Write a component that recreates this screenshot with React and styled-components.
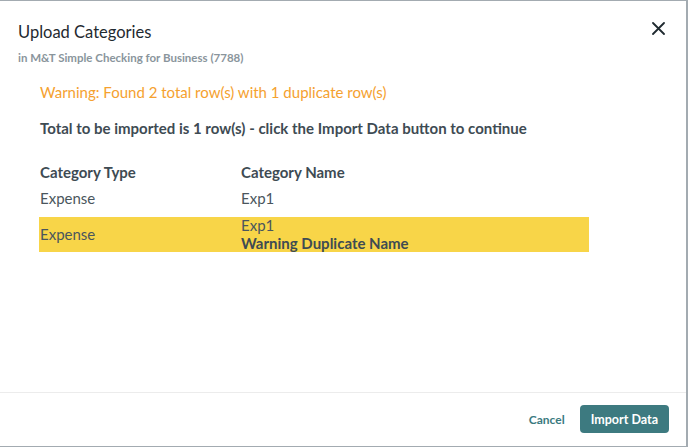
import React from 'react';
import styled, { createGlobalStyle } from 'styled-components';

const GlobalStyle = createGlobalStyle`
  html, body {
    margin: 0;
    padding: 0;
    background: #a3abb1;
    font-family: Lato, "Noto Sans", sans-serif;
  }
`;

const rows = [
  { type: 'Expense', name: 'Exp1' },
  { type: 'Expense', name: 'Exp1', warning: 'Warning Duplicate Name' },
];

const App = () => {
  return (
    <>
      <GlobalStyle />
      <Modal>
        <Header>
          <div>
            <Title>Upload Categories</Title>
            <Subtitle>in M&amp;T Simple Checking for Business (7788)</Subtitle>
          </div>
          <CloseButton aria-label="close">
            <svg width="13" height="13" viewBox="0 0 13 13">
              <path d="M1 1L12 12M12 1L1 12" stroke="#1f2a30" strokeWidth="1.8" strokeLinecap="round" />
            </svg>
          </CloseButton>
        </Header>

        <Body>
          <WarningText>Warning: Found 2 total row(s) with 1 duplicate row(s)</WarningText>
          <TotalText>Total to be imported is 1 row(s) - click the Import Data button to continue</TotalText>

          <Table>
            <HeadRow>
              <Cell>Category Type</Cell>
              <Cell>Category Name</Cell>
            </HeadRow>
            {rows.map((r, i) => (
              <Row key={i} $dup={!!r.warning}>
                <Cell>{r.type}</Cell>
                <Cell>
                  <div>{r.name}</div>
                  {r.warning && <DupNote>{r.warning}</DupNote>}
                </Cell>
              </Row>
            ))}
          </Table>
        </Body>

        <Footer>
          <CancelButton>Cancel</CancelButton>
          <ImportButton>Import Data</ImportButton>
        </Footer>
      </Modal>
    </>
  );
};

export default App;

const Modal = styled.div`
  margin: 1px 2px 1px 0;
  height: 445px;
  background: #fff;
  display: flex;
  flex-direction: column;
  box-sizing: border-box;
`;

const Header = styled.div`
  display: flex;
  justify-content: space-between;
  align-items: flex-start;
  padding: 19px 21px 0 18px;
`;

const Title = styled.h2`
  margin: 0;
  font-size: 16.5px;
  font-weight: 400;
  color: #1f2a30;
  line-height: 24px;
`;

const Subtitle = styled.p`
  margin: 6px 0 0;
  font-size: 11.5px;
  font-weight: 700;
  color: #8a959c;
  line-height: 16px;
`;

const CloseButton = styled.button`
  background: none;
  border: 0;
  padding: 0;
  margin-top: 2px;
  cursor: pointer;
  display: flex;
`;

const Body = styled.div`
  flex: 1;
  padding: 16px 0 0 39px;
`;

const WarningText = styled.p`
  margin: 0 0 0 1px;
  font-size: 15px;
  color: #f5a12f;
  line-height: 20px;
`;

const TotalText = styled.p`
  margin: 16px 0 0 1px;
  font-size: 15px;
  font-weight: 700;
  color: #3e4b53;
  line-height: 20px;
`;

const Table = styled.div`
  margin-top: 21px;
  width: 550px;
`;

const HeadRow = styled.div`
  display: grid;
  grid-template-columns: 201px 1fr;
  font-weight: 700;
  font-size: 15px;
  color: #3e4b53;
  padding-left: 1px;
  height: 26px;
  align-items: center;
`;

const Row = styled.div`
  display: grid;
  grid-template-columns: 201px 1fr;
  align-items: center;
  font-size: 15px;
  color: #4a565d;
  padding-left: 1px;
  min-height: 26px;
  line-height: ${p => (p.$dup ? '17.5px' : '18px')};
  margin-top: ${p => (p.$dup ? '6px' : '0')};
  background: ${p => (p.$dup ? '#f8d548' : 'transparent')};
`;

const Cell = styled.div``;

const DupNote = styled.div`
  font-weight: 700;
  color: #3e4b53;
`;

const Footer = styled.div`
  border-top: 1px solid #ececec;
  display: flex;
  justify-content: flex-end;
  align-items: center;
  gap: 15px;
  padding: 12px 17px 13px 0;
`;

const CancelButton = styled.button`
  background: none;
  border: 0;
  font-family: inherit;
  font-size: 12px;
  font-weight: 700;
  color: #3b7a80;
  cursor: pointer;
  padding: 0;
`;

const ImportButton = styled.button`
  background: #3d7a80;
  border: 0;
  border-radius: 4px;
  font-family: inherit;
  font-size: 12.5px;
  font-weight: 700;
  color: #fff;
  padding: 0 11px;
  height: 28px;
  cursor: pointer;
`;
